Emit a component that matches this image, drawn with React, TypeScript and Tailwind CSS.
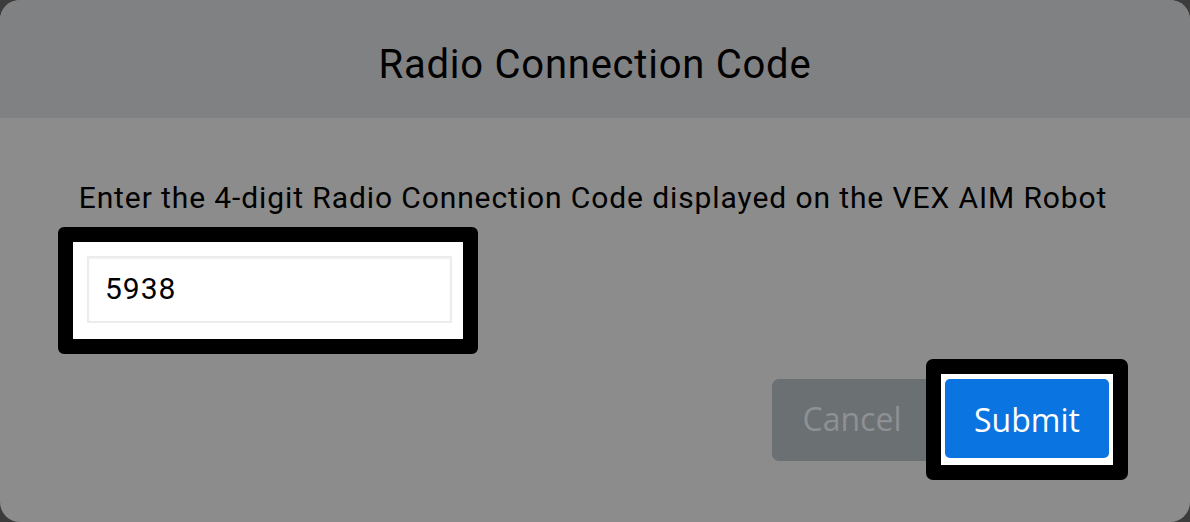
import React from "react";

export default function App() {
  return (
    <div className="w-[1190px] h-[522px] bg-[#3c3c3c]">
      <div className="w-full h-full rounded-[20px] bg-[#8c8c8c] overflow-hidden flex flex-col">
        <div className="h-[118px] shrink-0 bg-[#808183] flex items-center justify-center pt-[10px]">
          <h1 className="text-[40px] leading-[47px] tracking-[0.76px] text-black font-normal" style={{ fontFamily: "Roboto, sans-serif" }}>
            Radio Connection Code
          </h1>
        </div>
        <div className="flex flex-col pt-[62px] pl-[58px] pr-[62px]" style={{ fontFamily: "Roboto, sans-serif" }}>
          <p className="text-center text-[30px] leading-[35px] tracking-[0.9px] text-black whitespace-nowrap">
            Enter the 4-digit Radio Connection Code displayed on the VEX AIM Robot
          </p>
          <div className="mt-[12px] w-[420px] h-[127px] border-[15px] border-black rounded-[6px] bg-white pt-[14px] pb-[16px] pl-[14px] pr-[11px]">
            <input
              readOnly
              value="5938"
              className="w-full h-full border-2 border-[#ececec] bg-white pl-[16px] pb-[2px] text-[30px] tracking-[1px] text-black outline-none shadow-[inset_0_1px_2px_rgba(0,0,0,0.06)]"
              style={{ fontFamily: "Roboto, sans-serif" }}
            />
          </div>
          <div className="mt-[5px] flex justify-end items-start" style={{ fontFamily: "'Open Sans', sans-serif" }}>
            <button className="mt-[20px] -mr-[6px] h-[82px] w-[160px] rounded-[7px] bg-[#6b7073] text-[#8e9193] text-[32px] pb-[2px]">
              Cancel
            </button>
            <div className="relative w-[202px] h-[121px] border-[15px] border-black rounded-[7px] bg-white pt-[5px] pb-[7px] px-[4px]">
              <button className="w-full h-full rounded-[5px] bg-[#0a74e0] text-white text-[32px] pt-[2px]">Submit</button>
            </div>
          </div>
        </div>
      </div>
    </div>
  );
}
